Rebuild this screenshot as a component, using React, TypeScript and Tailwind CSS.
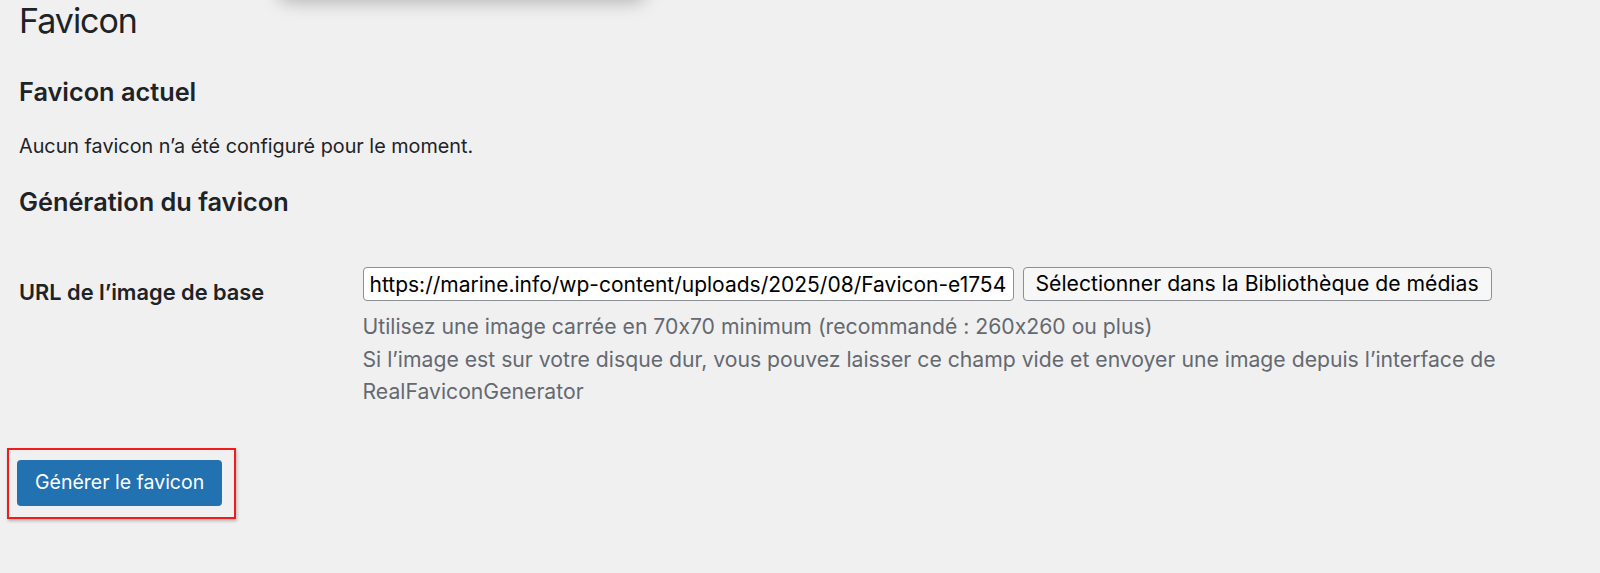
export default function App() {
  return (
    <div className="relative min-h-screen overflow-hidden bg-[#f0f0f1] font-['Inter',sans-serif] text-[#1d2327] [font-variant-ligatures:no-contextual]">
      {/* floating panel above the viewport, only its shadow shows */}
      <div className="absolute left-[278px] top-[-34px] h-[34px] w-[368px] rounded-xl bg-[#f0f0f1] shadow-[0_2px_18px_rgba(0,0,0,0.26)]" />

      <div className="pl-[19px] pr-5">
        <h1 className="text-[34px] font-normal leading-[42px] tracking-[-0.03em]">Favicon</h1>

        <h2 className="mt-[34px] text-[25.3px] font-semibold leading-[32px]">Favicon actuel</h2>
        <p className="mt-[24px] text-[19.8px] leading-[28px]">
          Aucun favicon n’a été configuré pour le moment.
        </p>

        <h2 className="mt-[26px] text-[25.3px] font-semibold leading-[32px]">Génération du favicon</h2>

        <div className="mt-[49px] flex items-start">
          <label className="mt-[8px] w-[343.5px] shrink-0 text-[21.8px] font-semibold leading-[34px]">
            URL de l’image de base
          </label>
          <div>
            <div className="flex items-center">
              <input
                type="text"
                readOnly
                value="https://marine.info/wp-content/uploads/2025/08/Favicon-e1754567890123.png"
                className="h-[34px] w-[651px] rounded-[4px] border border-[#8c8f94] bg-white px-[6px] text-[21px] text-black outline-none"
              />
              <button className="ml-[9px] h-[34px] rounded-[4px] border border-[#8c8f94] bg-[#f7f7f7] px-[12px] text-[21.2px] text-black">
                Sélectionner dans la Bibliothèque de médias
              </button>
            </div>
            <div className="mt-[9px] whitespace-nowrap text-[21.2px] leading-[32.6px] text-[#646970]">
              <p>Utilisez une image carrée en 70x70 minimum (recommandé : 260x260 ou plus)</p>
              <p>
                Si l’image est sur votre disque dur, vous pouvez laisser ce champ vide et envoyer une image depuis l’interface de
                <br />
                RealFaviconGenerator
              </p>
            </div>
          </div>
        </div>

        <div className="ml-[-12px] mt-[40px] inline-block border-2 border-[#f01b1b] pb-[11px] pl-[8px] pr-[12px] pt-[10px] shadow-[1px_2px_3px_rgba(0,0,0,0.25)]">
          <button className="h-[46px] rounded-[4px] bg-[#2271b1] px-[18px] text-[19.5px] text-white">
            Générer le favicon
          </button>
        </div>
      </div>
    </div>
  );
}
